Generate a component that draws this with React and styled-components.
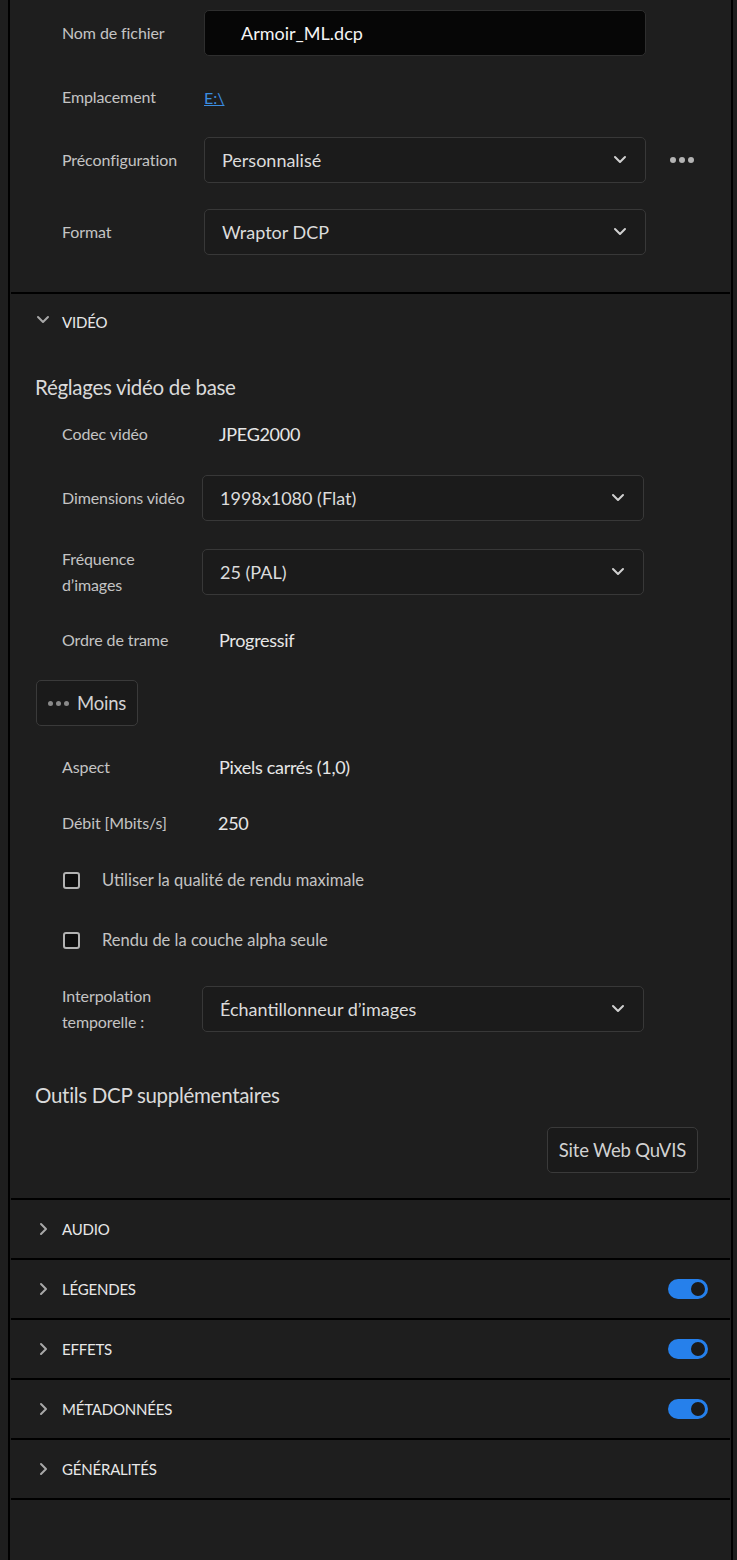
import React from 'react';
import styled, { createGlobalStyle } from 'styled-components';

const GlobalStyle = createGlobalStyle`
    body {
        margin: 0;
        background: #1e1e1e;
        font-family: Lato, "Open Sans", "Noto Sans", sans-serif;
        color: #c8c8c8;
    }
`;

// 기본 틀
const Page = styled.div`
    min-height: 1560px;
    padding: 0 4px 0 8px;
    background: #1e1e1e;
    box-sizing: border-box;
    display: flex;
`;

const Panel = styled.div`
    flex: 1;
    min-height: 1560px;
    border-left: 2px solid #000;
    border-right: 2px solid #000;
    background: #1e1e1e;
`;

const Section = styled.div`
    padding-bottom: ${p => p.$pb || 0}px;
    border-bottom: 2px solid #000;
    margin: 0 1px;
`;

const Row = styled.div`
    display: flex;
    align-items: center;
    margin-top: ${p => p.$mt || 0}px;
    min-height: ${p => p.$h || 46}px;
    padding-left: 51px;
`;

const Label = styled.div`
    width: ${p => p.$w || 142}px;
    flex-shrink: 0;
    font-size: 16px;
    line-height: 26px;
    letter-spacing: -0.1px;
    color: #c4c4c4;
`;

const Value = styled.div`
    font-size: 18px;
    letter-spacing: -0.3px;
    color: #e6e6e6;
    padding-left: ${p => p.$pl || 0}px;
`;

const TextInput = styled.div`
    width: 442px;
    height: 46px;
    box-sizing: border-box;
    background: #060606;
    border: 1px solid #2e2e2e;
    border-radius: 5px;
    display: flex;
    align-items: center;
    padding-left: 36px;
    font-size: 18px;
    color: #f4f4f4;
    letter-spacing: 0;
`;

const SelectBox = styled.div`
    width: ${p => p.$w || 442}px;
    height: 46px;
    box-sizing: border-box;
    background: #1b1b1b;
    border: 1px solid #383838;
    border-radius: 5px;
    display: flex;
    align-items: center;
    justify-content: space-between;
    padding: 0 18px 0 17px;
    font-size: 18px;
    letter-spacing: 0;
    color: #dcdcdc;
`;

const Link = styled.a`
    font-size: 16px;
    color: #3b8de0;
    text-decoration: underline;
`;

const Dots = styled.div`
    display: flex;
    gap: ${p => p.$gap || 3}px;
    margin-left: ${p => p.$ml || 0}px;

    span {
        width: ${p => p.$size || 6}px;
        height: ${p => p.$size || 6}px;
        border-radius: 50%;
        background: ${p => p.$color || '#b4b4b4'};
    }
`;

const Header = styled.div`
    display: flex;
    align-items: center;
    height: ${p => p.$h || 58}px;
    padding: 0 22px 0 25px;
`;

const ChevronSlot = styled.div`
    width: 26px;
    display: flex;
    align-items: center;
    color: #a8a8a8;
`;

const HeaderTitle = styled.div`
    flex: 1;
    font-size: 15px;
    letter-spacing: -0.2px;
    color: #e8e8e8;
    text-transform: uppercase;
`;

const SubHeading = styled.div`
    margin-top: ${p => p.$mt || 0}px;
    padding-left: 24px;
    font-size: 20.5px;
    line-height: 28px;
    letter-spacing: -0.3px;
    color: #dadada;
`;

const GhostButton = styled.button`
    height: 46px;
    box-sizing: border-box;
    background: #1a1a1a;
    border: 1px solid #3a3a3a;
    border-radius: 5px;
    display: flex;
    align-items: center;
    gap: 8px;
    padding: 0 11px;
    font-family: inherit;
    font-size: 18.5px;
    letter-spacing: -0.2px;
    color: #d2d2d2;
`;

const MoreRow = styled.div`
    margin-top: 25px;
    padding-left: 25px;
`;

const ButtonRow = styled.div`
    margin-top: 18px;
    padding-right: 32px;
    display: flex;
    justify-content: flex-end;
`;

const CheckRow = styled.div`
    display: flex;
    align-items: center;
    height: 30px;
    margin-top: ${p => p.$mt || 0}px;
    padding-left: 52px;
    font-size: 16.5px;
    letter-spacing: 0;
    color: #c4c4c4;
`;

const Box = styled.span`
    width: 13px;
    height: 13px;
    border: 2px solid #b2b2b2;
    border-radius: 3px;
    background: #0e0e0e;
    margin-right: 22px;
`;

const Toggle = styled.div`
    width: 40px;
    height: 20px;
    border-radius: 10px;
    background: #2680eb;
    position: relative;

    &::after {
        content: '';
        position: absolute;
        right: 1px;
        top: 1px;
        width: 14px;
        height: 14px;
        border-radius: 50%;
        border: 2px solid #2680eb;
        background: #1a1a1a;
    }
`;

const Chevron = ({ dir = 'down', size = 14 }) => {
    const paths = {
        down: 'M2 4 L7 9 L12 4',
        right: 'M5 2 L10 7 L5 12',
    };
    return (
        <svg width={size} height={size} viewBox="0 0 14 14" fill="none">
            <path d={paths[dir]} stroke="currentColor" strokeWidth="2" strokeLinecap="round" strokeLinejoin="round" />
        </svg>
    );
};

const Select = ({ children, w }) => (
    <SelectBox $w={w}>
        <span>{children}</span>
        <span style={{ color: '#d0d0d0', display: 'flex' }}><Chevron /></span>
    </SelectBox>
);

const ThreeDots = (props) => (
    <Dots {...props}><span /><span /><span /></Dots>
);

const collapsed = [
    { title: 'Audio', toggle: false },
    { title: 'Légendes', toggle: true },
    { title: 'Effets', toggle: true },
    { title: 'Métadonnées', toggle: true },
    { title: 'Généralités', toggle: false },
];

function App() {
    return (
        <>
            <GlobalStyle />
            <Page>
                <Panel>
                    {/* 파일 설정 */}
                    <Section $pb={37}>
                        <Row $mt={10}>
                            <Label>Nom de fichier</Label>
                            <TextInput>Armoir_ML.dcp</TextInput>
                        </Row>
                        <Row $mt={18}>
                            <Label>Emplacement</Label>
                            <Link>E:\</Link>
                        </Row>
                        <Row $mt={17}>
                            <Label>Préconfiguration</Label>
                            <Select>Personnalisé</Select>
                            <ThreeDots $ml={24} $gap={3} />
                        </Row>
                        <Row $mt={26}>
                            <Label>Format</Label>
                            <Select>Wraptor DCP</Select>
                        </Row>
                    </Section>

                    {/* 비디오 */}
                    <Section $pb={25}>
                        <Header $h={56}>
                            <ChevronSlot style={{ marginTop: -4 }}><Chevron /></ChevronSlot>
                            <HeaderTitle>Vidéo</HeaderTitle>
                        </Header>
                        <SubHeading $mt={23}>Réglages vidéo de base</SubHeading>
                        <Row $mt={18} $h={30}>
                            <Label $w={157}>Codec vidéo</Label>
                            <Value>JPEG2000</Value>
                        </Row>
                        <Row $mt={26}>
                            <Label $w={140}>Dimensions vidéo</Label>
                            <Select w={442}>1998x1080 (Flat)</Select>
                        </Row>
                        <Row $mt={25}>
                            <Label $w={140}>Fréquence<br />d’images</Label>
                            <Select w={442}>25 (PAL)</Select>
                        </Row>
                        <Row $mt={27} $h={30}>
                            <Label $w={157}>Ordre de trame</Label>
                            <Value>Progressif</Value>
                        </Row>
                        <MoreRow>
                            <GhostButton>
                                <ThreeDots $size={5} $gap={3} $color="#8a8a8a" />
                                Moins
                            </GhostButton>
                        </MoreRow>
                        <Row $mt={26} $h={30}>
                            <Label $w={157}>Aspect</Label>
                            <Value>Pixels carrés (1,0)</Value>
                        </Row>
                        <Row $mt={26} $h={30}>
                            <Label $w={156}>Débit [Mbits/s]</Label>
                            <Value>250</Value>
                        </Row>
                        <CheckRow $mt={27}>
                            <Box />
                            Utiliser la qualité de rendu maximale
                        </CheckRow>
                        <CheckRow $mt={30}>
                            <Box />
                            Rendu de la couche alpha seule
                        </CheckRow>
                        <Row $mt={28}>
                            <Label $w={140}>Interpolation<br />temporelle :</Label>
                            <Select w={442}>Échantillonneur d’images</Select>
                        </Row>
                        <SubHeading $mt={46}>Outils DCP supplémentaires</SubHeading>
                        <ButtonRow>
                            <GhostButton>Site Web QuVIS</GhostButton>
                        </ButtonRow>
                    </Section>

                    {/* 접힌 섹션들 */}
                    {collapsed.map(s => (
                        <Section key={s.title}>
                            <Header>
                                <ChevronSlot><Chevron dir="right" /></ChevronSlot>
                                <HeaderTitle>{s.title}</HeaderTitle>
                                {s.toggle && <Toggle />}
                            </Header>
                        </Section>
                    ))}
                </Panel>
            </Page>
        </>
    );
}

export default App;
